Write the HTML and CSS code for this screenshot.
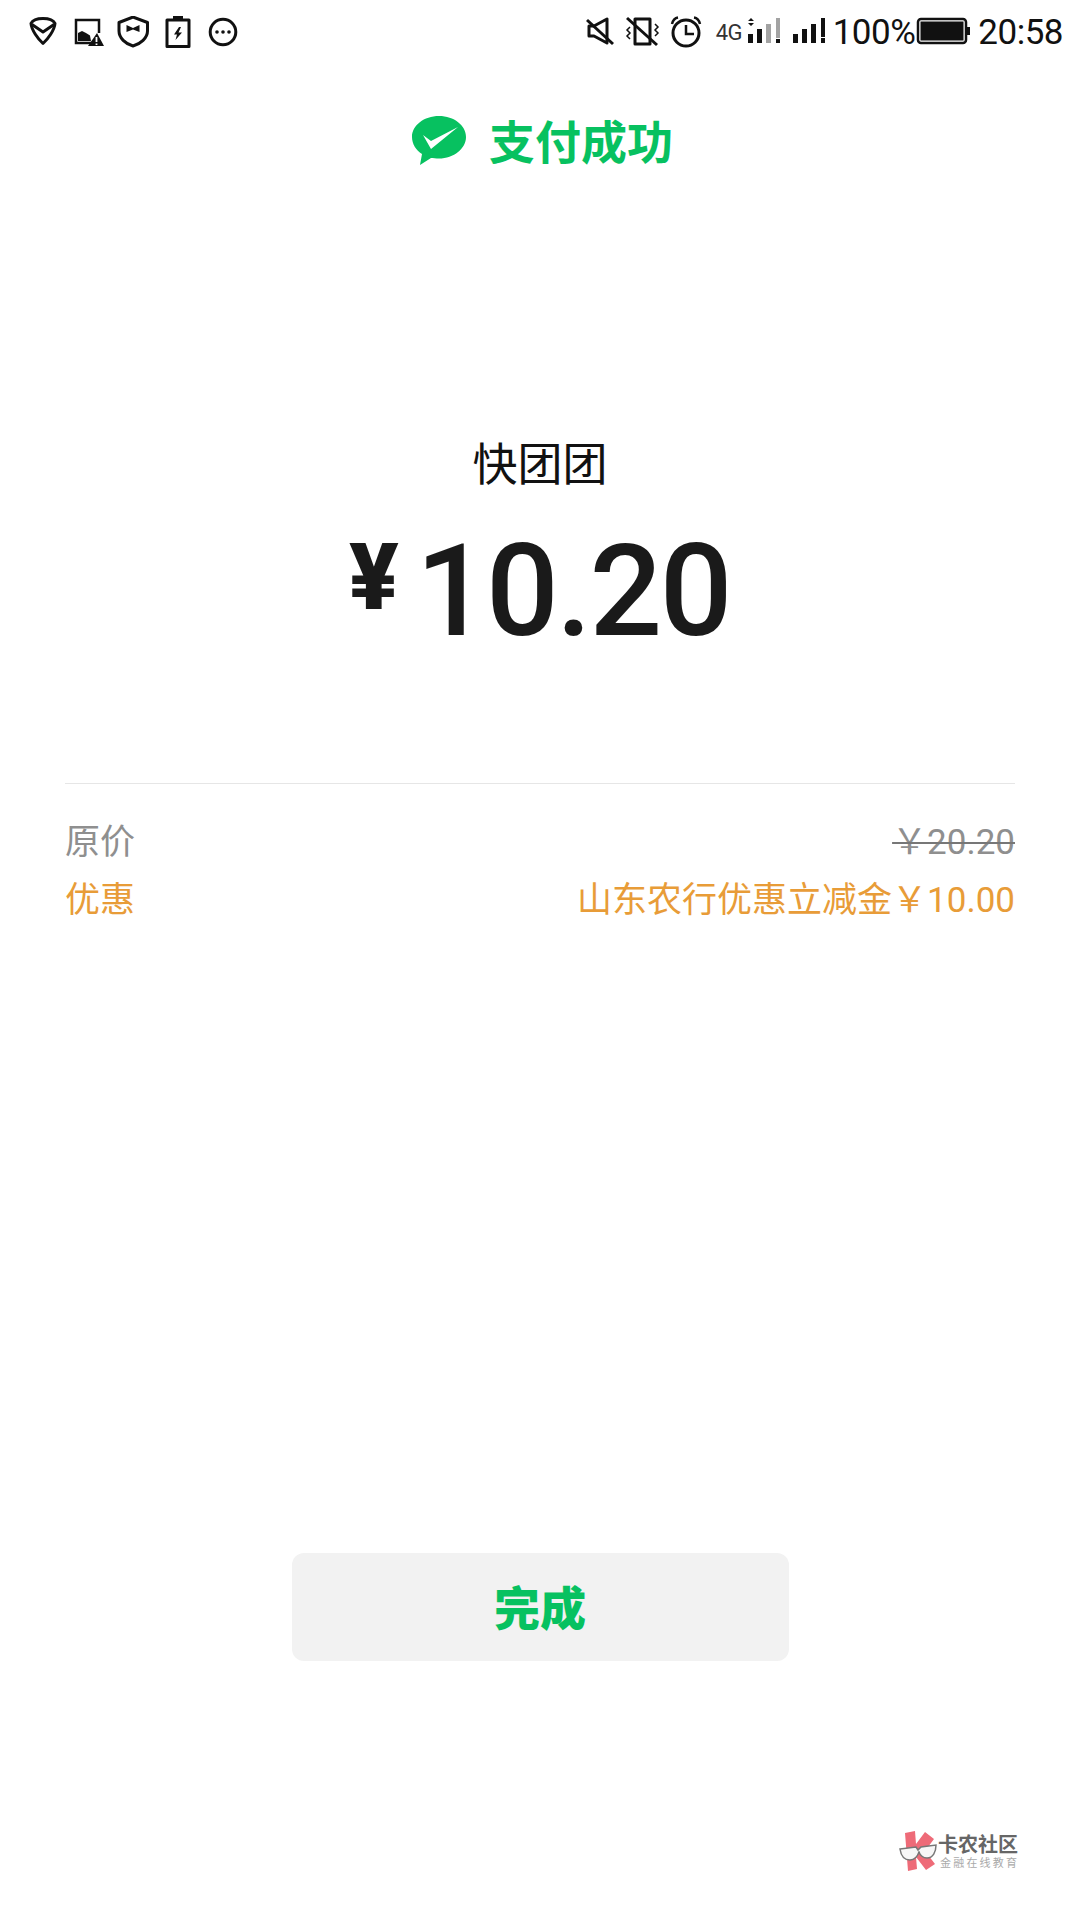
FILE: index.html
```html
<!DOCTYPE html>
<html lang="zh-CN">
<head>
<meta charset="utf-8">
<title>支付成功</title>
<link rel="stylesheet" href="styles.css">
</head>
<body>
<div class="page">
  <header class="status">
    <div class="status-left">
      <svg class="ic-l" viewBox="27 16 32 32"><path class="s" d="M43 18.5C37 18.5 32.5 20.5 31 23.5C31.5 30 38 39 43 43.5C48 39 54.500 30 55 23.500C53.500 20.500 49 18.500 43 18.500Z"/><path class="s" d="M32 24.500L43 32L54 24.500"/></svg>
      <svg class="ic-l" viewBox="72 16 32 32"><path class="s2" d="M92 43H76V20H99V33"/><path class="f" d="M78 41V33L82 31L86 33L90 35.500L91 41Z"/><path class="f" d="M97 33L104 46H88Z"/><path class="w" d="M96.500 37V42M96.500 43.500V45"/></svg>
      <svg class="ic-l" viewBox="116.500 16 32 32"><path class="s" d="M132.500 17L147 22.500V31C147 38 140 44 132.500 46C125 44 118.500 38 118.500 31V22.500Z"/><path class="f" d="M126 25L132.500 28L139 25V32L132.500 29.500L126 32Z"/></svg>
      <svg class="ic-l" viewBox="162 16 32 32"><path class="s" d="M167 20H189V46.500H167Z"/><path class="f" d="M173 16H183V19H173Z"/><path class="f" d="M179 27L174 34.500H177L175.500 40L182 32.500H178.500L181 27Z"/></svg>
      <svg class="ic-l" viewBox="207 16 32 32"><circle class="s" cx="223" cy="32" r="12.800"/><circle class="f" cx="217" cy="32" r="1.800"/><circle class="f" cx="223" cy="32" r="1.800"/><circle class="f" cx="229" cy="32" r="1.800"/></svg>
    </div>
    <div class="status-right">
      <svg class="ic-mute" viewBox="581 16 38 32"><path class="s" d="M587 26H592L605 19V43L592 36H587Z"/><path class="s" d="M585 20L611 44"/></svg>
      <svg class="ic-vib" viewBox="620 16 45 32"><path class="s" d="M634 19H649V44H634Z"/><path class="s" d="M626 18L656 45"/><path class="t" d="M629 27L626 30L629 33L626 36L629 39M654 24L657 27L654 30L657 33L654 36"/></svg>
      <svg class="ic-alarm" viewBox="665 16 45 32"><circle class="s" cx="685" cy="33" r="13"/><path class="s2" d="M685 25V34H693"/><path class="s2" d="M671 24C672 20 674 18 677 17.500M699 24C698 20 696 18 693 17.500"/></svg>
      <span class="net">4G</span>
      <svg class="ic-sig1" viewBox="744 16 40 32"><path class="f" d="M745 34H750V43H745ZM754 29H759V43H754Z"/><path class="g" d="M763 24H768V43H763ZM773 18H777V38H773Z"/><path class="f" d="M748 18L751 21H745ZM748 26L751 23H745ZM773 39H777V43H773Z"/></svg>
      <svg class="ic-sig2" viewBox="784 16 46 32"><path class="f" d="M790 34H795V43H790ZM799 29H804V43H799ZM808 24H813V43H808ZM818 18H822V37H818ZM818 38H822V43H818Z"/></svg>
      <span class="pct">100%</span>
      <svg class="ic-batt" viewBox="919 16 60 32"><rect class="s2" x="922" y="19" width="48" height="24" rx="3"/><rect class="f" x="924.500" y="21.500" width="43" height="19"/><path class="f" d="M971 27H974V35H971Z"/></svg>
      <span class="time">20:58</span>
    </div>
  </header>

  <div class="title">
    <svg class="wx" viewBox="0 0 56 52"><path class="wx-bg" d="M28 1C13 1 1 10.500 1 22C1 29 5 35 11 39L9 50L20 43C22 43 25 43.500 28 43.500C43 43.500 55 33.500 55 22C55 10.500 43 1 28 1Z"/><path class="wx-ck" d="M12 20L20 26L47 12L20 34Z"/></svg>
    <span class="title-text">支付成功</span>
  </div>

  <div class="merchant">快团团</div>
  <div class="amount"><span class="yen">&#xA5;</span><span class="num">10.20</span></div>

  <div class="rule"></div>

  <div class="row row-grey"><span>原价</span><span class="strike">&#xFFE5;20.20</span></div>
  <div class="row row-orange"><span>优惠</span><span>山东农行优惠立减金&#xFFE5;10.00</span></div>

  <button class="done">完成</button>

  <div class="mark">
    <svg class="mark-logo" viewBox="0 0 38 42"><path class="mk" d="M6 3L16 1L17 14L26 2L35 9L26 21L36 34L27 40L17 27L18 39L9 41Z"/><path class="mk-g" d="M1 19L17 17L19 20L22 17L37 15C37 22 34 28 28 28C24 28 21 25 20 22C19 25 16 30 11 30C5 30 2 26 1 19Z"/></svg>
    <div class="mark-text">
      <div class="mark-a">卡农社区</div>
      <div class="mark-b">金融在线教育</div>
    </div>
  </div>
</div>
</body>
</html>
```

FILE: styles.css
```css
* { box-sizing: border-box; }
html, body { margin: 0; padding: 0; background: #fff; }
body { font-family: "Noto Sans CJK SC", "Noto Sans", sans-serif; }
.page { position: relative; width: 1080px; height: 1920px; display: flex; flex-direction: column; padding-bottom: 259px; background: #fff; overflow: hidden; }

.status { height: 64px; display: flex; justify-content: space-between; align-items: center; padding-right: 17px; color: #111; font-family: Roboto, sans-serif; }
.status-left { display: flex; gap: 13px; padding-left: 27px; }
.status-right { display: flex; align-items: center; }
.status svg { display: block; height: 32px; flex: none; }
.ic-l { width: 32px; }
.ic-mute { width: 38px; }
.ic-vib, .ic-alarm { width: 45px; }
.ic-sig1 { width: 40px; }
.ic-sig2 { width: 46px; }
.ic-batt { width: 60px; }
.net { width: 36px; padding-left: 5px; font-size: 22px; letter-spacing: -0.5px; color: #333; }
.pct { font-size: 35px; font-weight: 400; letter-spacing: -0.5px; }
.time { font-size: 35px; font-weight: 400; margin-left: 3px; letter-spacing: -0.5px; }

.s { fill: none; stroke: #111; stroke-width: 3; stroke-linejoin: round; }
.s2 { fill: none; stroke: #111; stroke-width: 2.5; }
.t { fill: none; stroke: #111; stroke-width: 1.500; }
.f { fill: #111; }
.g { fill: #a3a3a3; }
.w { fill: none; stroke: #fff; stroke-width: 1.800; }

.title { height: 60px; margin-top: 47px; display: flex; justify-content: center; align-items: center; gap: 22px; padding-left: 4px; }
.wx { width: 56px; height: 52px; display: block; }
.wx-bg { fill: #07c160; }
.wx-ck { fill: #fff; }
.title-text { font-size: 46px; font-weight: 700; color: #07c160; line-height: 56px; padding-bottom: 4px; }

.merchant { margin-top: 261px; text-align: center; font-size: 45px; line-height: 60px; color: #111; }
.amount { margin-top: 34px; display: flex; justify-content: center; align-items: flex-start; height: 130px; color: #1a1a1a; font-family: Roboto, sans-serif; padding-right: 1px; }
.yen { font-size: 92px; font-weight: 900; line-height: 104px; margin-right: 17px; }
.num { font-size: 128px; font-weight: 500; line-height: 130px; letter-spacing: -2.500px; }

.rule { height: 1px; margin: 127px 65px 0; background: #e6e6e6; }
.row { display: flex; justify-content: space-between; margin: 0 65px; height: 58px; align-items: center; font-size: 35px; font-family: Roboto, "Noto Sans CJK SC", sans-serif; }
.row-grey { margin-top: 25px; color: #8f8f8f; }
.row-orange { color: #e89c38; }
.strike { text-decoration: line-through; text-decoration-thickness: 2px; text-decoration-color: #777; }

.done { display: block; align-self: center; margin-top: auto; width: 497px; height: 108px; border: 0; border-radius: 12px; background: #f2f2f2; color: #07c160; font-family: "Noto Sans CJK SC", sans-serif; font-size: 46px; font-weight: 900; padding: 0 0 4px; }

.mark { position: absolute; left: 899px; top: 1830px; display: flex; gap: 1px; align-items: flex-start; font-family: Roboto, "Noto Sans CJK SC", sans-serif; }
.mark-logo { width: 38px; height: 42px; display: block; }
.mk { fill: #ee6b78; }
.mk-g { fill: #f7f7f7; stroke: #777; stroke-width: 1.500; }
.mark-text { padding-top: 3px; }
.mark-a { font-size: 20px; line-height: 24px; font-weight: 700; color: #666; white-space: nowrap; }
.mark-b { font-size: 11px; line-height: 13px; color: #aaa; letter-spacing: 2.200px; white-space: nowrap; padding-left: 2px; }
```
